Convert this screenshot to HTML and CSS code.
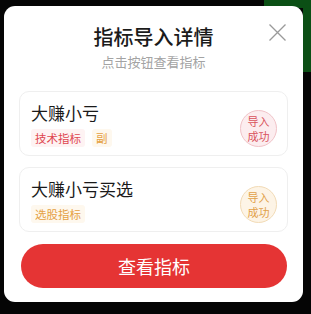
FILE: index.html
```html
<!DOCTYPE html>
<html lang="zh-CN">
<head>
<meta charset="utf-8">
<title>指标导入详情</title>
<link rel="stylesheet" href="styles.css">
</head>
<body>
<div class="modal">
  <div class="header">
    <div class="title">指标导入详情</div>
    <div class="subtitle">点击按钮查看指标</div>
    <svg class="close" width="17" height="17" viewBox="0 0 17 17"><path d="M0.5 0.5L16.5 16.5M16.5 0.5L0.5 16.5" stroke="#9a9a9a" stroke-width="1.3" fill="none"/></svg>
  </div>
  <div class="list">
    <div class="card">
      <div class="info">
        <div class="name">大赚小亏</div>
        <div class="tags">
          <span class="tag red">技术指标</span>
          <span class="tag orange">副</span>
        </div>
      </div>
      <div class="badge badge-red"><span>导入</span><span>成功</span></div>
    </div>
    <div class="card">
      <div class="info">
        <div class="name">大赚小亏买选</div>
        <div class="tags">
          <span class="tag orange">选股指标</span>
        </div>
      </div>
      <div class="badge badge-orange"><span>导入</span><span>成功</span></div>
    </div>
  </div>
  <div class="btn">查看指标</div>
</div>
</body>
</html>
```
FILE: styles.css
```css
html, body {
  margin: 0;
  padding: 0;
}
body {
  width: 311px;
  height: 314px;
  overflow: hidden;
  background-color: #050505;
  background-image: linear-gradient(#0b4f15, #0b4f15), linear-gradient(#0b4f15, #0b4f15);
  background-repeat: no-repeat;
  background-position: 264px 0, 303px 0;
  background-size: 47px 8px, 8px 72px;
  font-family: "Noto Sans CJK SC", "Noto Sans", sans-serif;
  padding-top: 6px;
  padding-left: 4px;
  box-sizing: border-box;
}
.modal {
  position: relative;
  width: 299px;
  height: 296px;
  box-sizing: border-box;
  background: #fff;
  border-radius: 11px;
  padding: 17px 15px 14px;
  display: flex;
  flex-direction: column;
}
.header {
  display: flex;
  flex-direction: column;
  align-items: center;
}
.title {
  font-size: 20px;
  line-height: 28px;
  font-weight: 500;
  color: #1b1b1b;
}
.subtitle {
  margin-top: 2px;
  font-size: 13px;
  line-height: 18px;
  color: #a3a3a3;
}
.close {
  position: absolute;
  top: 18px;
  right: 17px;
}
.list {
  margin-top: 20px;
  display: flex;
  flex-direction: column;
  gap: 11px;
}
.card {
  height: 65px;
  box-sizing: border-box;
  border: 1px solid #efefef;
  border-radius: 10px;
  padding: 8px 10px 0 11px;
  display: flex;
  justify-content: space-between;
  align-items: flex-start;
}
.name {
  margin-top: 1px;
  font-size: 17px;
  line-height: 24px;
  color: #1a1a1a;
}
.tags {
  margin-top: 4px;
  display: flex;
  gap: 7px;
}
.tag {
  font-size: 11.5px;
  line-height: 18px;
  padding: 0 4px;
  border-radius: 3px;
}
.tag.red {
  color: #de4650;
  background: #fef3f3;
}
.tag.orange {
  color: #e5a042;
  background: #fef8ee;
}
.badge {
  margin-top: 10px;
  width: 37px;
  height: 37px;
  box-sizing: border-box;
  border-radius: 50%;
  display: flex;
  flex-direction: column;
  align-items: center;
  justify-content: center;
  font-size: 11px;
  line-height: 15px;
}
.badge-red {
  background: #fcedef;
  border: 1px solid #f1c3c8;
  color: #d9535c;
}
.badge-orange {
  background: #fdf4e6;
  border: 1px solid #f2dbb6;
  color: #e1a048;
}
.btn {
  margin-top: 12px;
  height: 44px;
  border-radius: 22px;
  background: #e53434;
  color: #fff;
  font-size: 18px;
  display: flex;
  align-items: center;
  justify-content: center;
  margin-left: 2px;
  margin-right: 1px;
}
```
